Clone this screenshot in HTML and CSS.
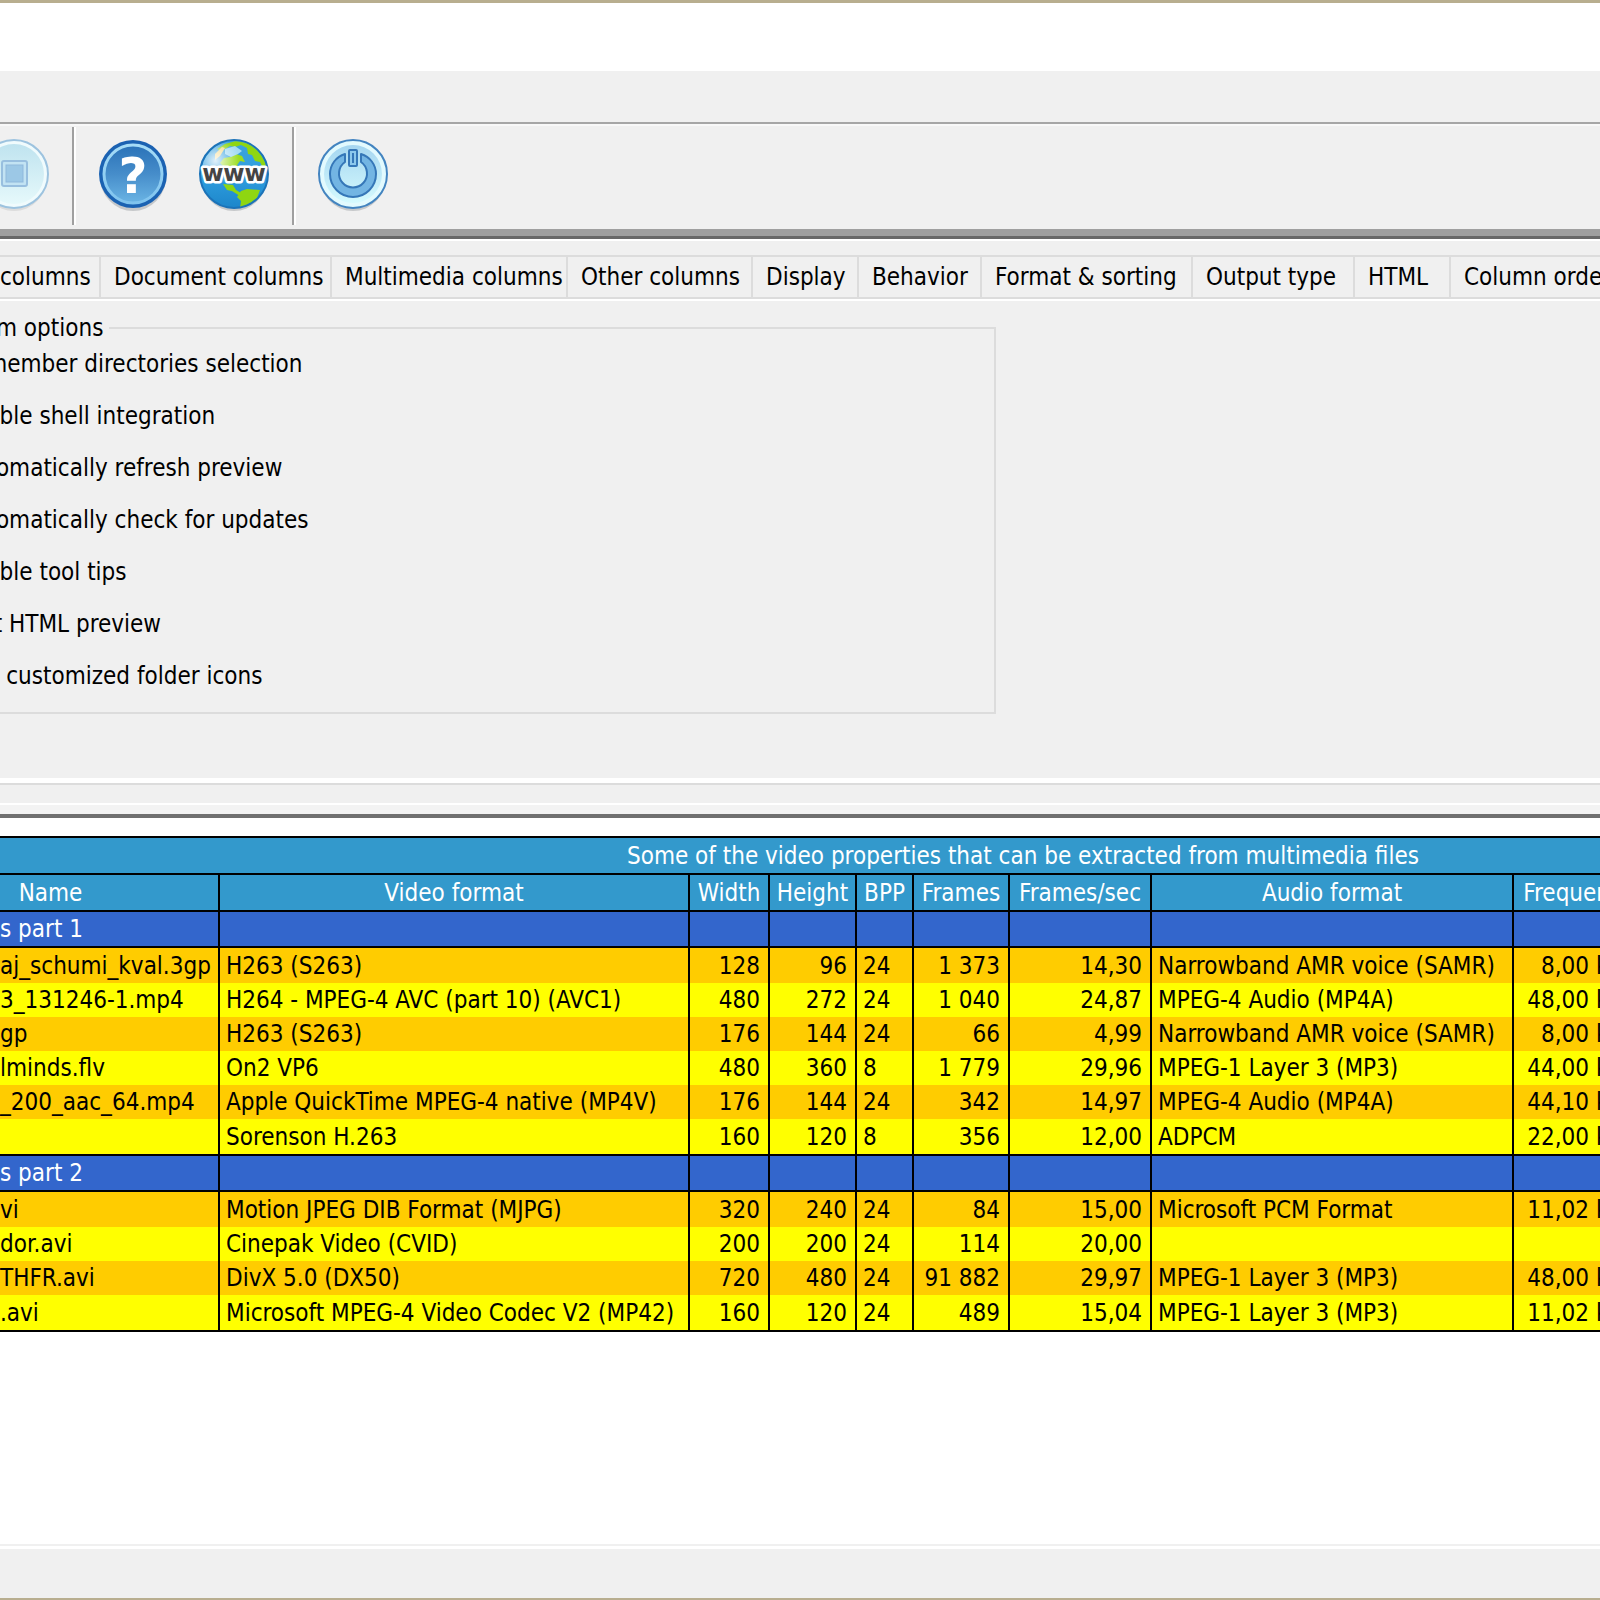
FILE: index.html
```
<!DOCTYPE html>
<html lang="en">
    <head>
        <meta charset="utf-8">
        <title>Directory listing</title>
        <link rel="stylesheet" href="styles.css">
    </head>
    <body>
        <div class="titlebar"></div>
        <div class="menubar"></div>

        <div class="toolbar">
            <button class="tool" aria-label="Stop" disabled>
                <svg viewBox="0 0 72 76">
                    <defs>
                        <linearGradient id="stop_fill" x1="0" y1="0" x2="0" y2="1">
                            <stop offset="0" stop-color="#bfe3ef"/>
                            <stop offset="1" stop-color="#e6f9fb"/>
                        </linearGradient>
                    </defs>
                    <ellipse cx="36" cy="39" rx="33" ry="34" fill="#dcdcdc"/>
                    <circle cx="36" cy="36" r="34" fill="#f0fbfd" stroke="#9dc3df" stroke-width="2"/>
                    <circle cx="36" cy="36" r="30" fill="url(#stop_fill)"/>
                    <rect x="24" y="23" width="25" height="25" rx="2" fill="#c2e3f3" stroke="#98bfdf" stroke-width="2"/>
                    <rect x="28" y="27" width="17" height="17" fill="#9cc8e6" stroke="#8fb9dc"/>
                </svg>
            </button>
            <div class="divider"></div>
            <button class="tool" aria-label="Help">
                <svg viewBox="0 0 72 76">
                    <defs>
                        <linearGradient id="help_fill" x1="0" y1="0" x2="0" y2="1">
                            <stop offset="0" stop-color="#2a72b8"/>
                            <stop offset="0.5" stop-color="#468dca"/>
                            <stop offset="1" stop-color="#6ab4e4"/>
                        </linearGradient>
                        <linearGradient id="help_ring" x1="0" y1="0" x2="0" y2="1">
                            <stop offset="0" stop-color="#a5dcf7"/>
                            <stop offset="1" stop-color="#7fc3ee"/>
                        </linearGradient>
                    </defs>
                    <ellipse cx="36" cy="39" rx="33" ry="34" fill="#c6c8ca"/>
                    <circle cx="36" cy="36" r="34" fill="#1b62b2"/>
                    <circle cx="36" cy="36" r="29" fill="url(#help_fill)" stroke="url(#help_ring)" stroke-width="3"/>
                    <text class="mark" x="36" y="55" text-anchor="middle">?</text>
                </svg>
            </button>
            <button class="tool" aria-label="Web site">
                <svg viewBox="0 0 72 76">
                    <defs>
                        <linearGradient id="sea" x1="0" y1="0" x2="0" y2="1">
                            <stop offset="0" stop-color="#3da3dd"/>
                            <stop offset="0.5" stop-color="#2f9fe0"/>
                            <stop offset="1" stop-color="#1d86ca"/>
                        </linearGradient>
                        <radialGradient id="shine" cx="0.22" cy="0.3" r="0.36">
                            <stop offset="0" stop-color="#fff" stop-opacity="0.85"/>
                            <stop offset="1" stop-color="#fff" stop-opacity="0"/>
                        </radialGradient>
                        <clipPath id="globe"><circle cx="36" cy="36" r="33"/></clipPath>
                    </defs>
                    <ellipse cx="36" cy="39" rx="33" ry="34" fill="#c6c8ca"/>
                    <circle cx="36" cy="36" r="34" fill="url(#sea)" stroke="#1c73b8" stroke-width="2"/>
                    <g clip-path="url(#globe)">
                        <path fill="#8fd611" d="M19 11l8-5 11-3 13 1 10 9 7 13-2 6-4-8-5-1-3-6-4-1-1-6-6-3-6 2-5-1-5 3-6 1z"/>
                        <path fill="#9bdd20" d="M38 16l6 2 3 6-5-1-3 4 4 4-7 2-1 4h-6l-3-8-4-4 4-5 6-1z"/>
                        <path fill="#8fd611" d="M25 46l10 1 3 5 5 3-1 3-8-5-5-1zM43 53l6-2 13 1-3 8-6 5-6 6-5-1 1-7-4-4z"/>
                        <path fill="#a5dbf4" d="M27 11l10-3 7 5-4 3-7 3-6-3z"/>
                        <path fill="#f5d780" d="M17 16l7-7 3 1-5 8-5 4z"/>
                        <circle cx="36" cy="36" r="33" fill="url(#shine)"/>
                    </g>
                    <text class="www" x="36" y="43" text-anchor="middle">www</text>
                </svg>
            </button>
            <div class="divider"></div>
            <button class="tool" aria-label="Exit">
                <svg viewBox="0 0 72 76">
                    <defs>
                        <linearGradient id="exit_fill" x1="0" y1="0" x2="0" y2="1">
                            <stop offset="0" stop-color="#a5d6f0"/>
                            <stop offset="1" stop-color="#d5fafe"/>
                        </linearGradient>
                    </defs>
                    <ellipse cx="36" cy="39" rx="33" ry="34" fill="#c6c8ca"/>
                    <circle cx="36" cy="36" r="34" fill="#e2fafe" stroke="#4384c0" stroke-width="2"/>
                    <circle cx="36" cy="36" r="29" fill="url(#exit_fill)"/>
                    <path d="M28 16a21 21 0 0 0-15 20a23 23 0 0 0 46 0a21 21 0 0 0-15-20v8a14 14 0 1 1-16 0z" fill="#73b5e3" stroke="#3577b8" stroke-width="2" stroke-linejoin="round"/>
                    <rect x="32" y="12" width="8" height="16" rx="1" fill="#8cc8ec" stroke="#3577b8" stroke-width="2"/>
                    <path d="M36 15v10" stroke="#3577b8" stroke-width="2"/>
                </svg>
            </button>
        </div>

        <div class="options">
            <div class="tabs" role="tablist">
                <button role="tab" class="tab tab_first">columns</button>
                <button role="tab" class="tab">Document columns</button>
                <button role="tab" class="tab">Multimedia columns</button>
                <button role="tab" class="tab">Other columns</button>
                <button role="tab" class="tab">Display</button>
                <button role="tab" class="tab">Behavior</button>
                <button role="tab" class="tab">Format &amp; sorting</button>
                <button role="tab" class="tab">Output type</button>
                <button role="tab" class="tab">HTML</button>
                <button role="tab" class="tab">Column order</button>
            </div>
            <fieldset class="program_options">
                <legend>Program options</legend>
                <label><input type="checkbox">Remember directories selection</label>
                <label><input type="checkbox">Enable shell integration</label>
                <label><input type="checkbox">Automatically refresh preview</label>
                <label><input type="checkbox">Automatically check for updates</label>
                <label><input type="checkbox">Enable tool tips</label>
                <label><input type="checkbox">Fast HTML preview</label>
                <label><input type="checkbox">Use customized folder icons</label>
            </fieldset>
        </div>
        <div class="splitter"></div>

        <div class="preview">
            <table class="listing">
                <colgroup>
                    <col class="c_name"><col class="c_video"><col class="c_width"><col class="c_height"><col class="c_bpp">
                    <col class="c_frames"><col class="c_fps"><col class="c_audio"><col class="c_freq"><col>
                </colgroup>
                <thead>
                    <tr><th colspan="10">Some of the video properties that can be extracted from multimedia files</th></tr>
                    <tr>
                        <th>Name</th><th>Video format</th><th>Width</th><th>Height</th><th>BPP</th>
                        <th>Frames</th><th>Frames/sec</th><th>Audio format</th><th>Frequency</th><th></th>
                    </tr>
                </thead>
                <tbody>
                    <tr class="group"><td>s part 1</td><td></td><td></td><td></td><td></td><td></td><td></td><td></td><td></td><td></td></tr>
                    <tr><td>aj_schumi_kval.3gp</td><td>H263 (S263)</td><td class="num">128</td><td class="num">96</td><td>24</td><td class="num">1 373</td><td class="num">14,30</td><td>Narrowband AMR voice (SAMR)</td><td class="num">8,00 kHz</td><td></td></tr>
                    <tr><td>3_131246-1.mp4</td><td>H264 - MPEG-4 AVC (part 10) (AVC1)</td><td class="num">480</td><td class="num">272</td><td>24</td><td class="num">1 040</td><td class="num">24,87</td><td>MPEG-4 Audio (MP4A)</td><td class="num">48,00 kHz</td><td></td></tr>
                    <tr><td>gp</td><td>H263 (S263)</td><td class="num">176</td><td class="num">144</td><td>24</td><td class="num">66</td><td class="num">4,99</td><td>Narrowband AMR voice (SAMR)</td><td class="num">8,00 kHz</td><td></td></tr>
                    <tr><td>lminds.flv</td><td>On2 VP6</td><td class="num">480</td><td class="num">360</td><td>8</td><td class="num">1 779</td><td class="num">29,96</td><td>MPEG-1 Layer 3 (MP3)</td><td class="num">44,00 kHz</td><td></td></tr>
                    <tr><td>_200_aac_64.mp4</td><td>Apple QuickTime MPEG-4 native (MP4V)</td><td class="num">176</td><td class="num">144</td><td>24</td><td class="num">342</td><td class="num">14,97</td><td>MPEG-4 Audio (MP4A)</td><td class="num">44,10 kHz</td><td></td></tr>
                    <tr><td></td><td>Sorenson H.263</td><td class="num">160</td><td class="num">120</td><td>8</td><td class="num">356</td><td class="num">12,00</td><td>ADPCM</td><td class="num">22,00 kHz</td><td></td></tr>
                </tbody>
                <tbody>
                    <tr class="group"><td>s part 2</td><td></td><td></td><td></td><td></td><td></td><td></td><td></td><td></td><td></td></tr>
                    <tr><td>vi</td><td>Motion JPEG DIB Format (MJPG)</td><td class="num">320</td><td class="num">240</td><td>24</td><td class="num">84</td><td class="num">15,00</td><td>Microsoft PCM Format</td><td class="num">11,02 kHz</td><td></td></tr>
                    <tr><td>dor.avi</td><td>Cinepak Video (CVID)</td><td class="num">200</td><td class="num">200</td><td>24</td><td class="num">114</td><td class="num">20,00</td><td></td><td></td><td></td></tr>
                    <tr><td>THFR.avi</td><td>DivX 5.0 (DX50)</td><td class="num">720</td><td class="num">480</td><td>24</td><td class="num">91 882</td><td class="num">29,97</td><td>MPEG-1 Layer 3 (MP3)</td><td class="num">48,00 kHz</td><td></td></tr>
                    <tr><td>.avi</td><td>Microsoft MPEG-4 Video Codec V2 (MP42)</td><td class="num">160</td><td class="num">120</td><td>24</td><td class="num">489</td><td class="num">15,04</td><td>MPEG-1 Layer 3 (MP3)</td><td class="num">11,02 kHz</td><td></td></tr>
                </tbody>
            </table>
        </div>

        <div class="statusbar"></div>
    </body>
</html>
```
FILE: styles.css
```
* {
    box-sizing: border-box;
}
body {
    margin: 0;
    min-height: 100vh;
    display: flex;
    flex-direction: column;
    overflow: hidden;
    background-color: #f0f0f0;
    color: #000;
    font-family: "DejaVu Sans Condensed", "DejaVu Sans", sans-serif;
    font-size: 24px;
    line-height: 34px;
}
button {
    font: inherit;
    color: inherit;
    background: none;
    border: 0;
    padding: 0;
}
.titlebar {
    height: 71px;
    border-top: 3px solid #b8ae8f;
    background-color: #fff;
}
.menubar {
    height: 53px;
    border-bottom: 2px solid #a6a6a6;
}

/* toolbar, scrolled a little past the left edge */
.toolbar {
    display: flex;
    align-items: center;
    height: 115px;
    padding-bottom: 8px;
    margin-left: -22px;
    border-bottom: 3px solid #686868;
    box-shadow: inset 0 -7px #9f9f9f, inset 0 2px #f8f8f8;
}
.tool {
    width: 72px;
    height: 76px;
}
.tool svg {
    display: block;
    width: 72px;
    height: 76px;
}
.tool + .tool {
    margin-left: 29px;
}
.divider {
    width: 4px;
    height: 98px;
    margin: 0 21px 0 22px;
    background-color: #a0a0a0;
    border-right: 2px solid #fff;
}
.mark {
    font: bold 50px "DejaVu Sans", sans-serif;
    fill: #fff;
}
.www {
    font: bold 23px "DejaVu Sans", sans-serif;
    fill: #444;
    stroke: #fff;
    stroke-width: 5px;
    stroke-linejoin: round;
    paint-order: stroke;
}

.options {
    height: 539px;
    padding-top: 14px;
    border-top: 2px solid #fff;
}
.tabs {
    display: grid;
    grid-template-columns: 101px 231px 236px 185px 106px 123px 211px 162px 96px 1fr;
    height: 46px;
    border-top: 2px solid #dcdcdc;
    border-bottom: 2px solid #fff;
}
.tab {
    height: 42px;
    padding-left: 13px;
    border-right: 2px solid #dcdcdc;
    border-bottom: 2px solid #dcdcdc;
    text-align: left;
    white-space: nowrap;
    overflow: hidden;
}
.tab_first {
    padding-left: 0;
}
.tab:last-child {
    border-right: 0;
}
.program_options {
    width: 1120px;
    height: 396px;
    margin: 17px 0 0 -124px;
    padding: 0 0 0 54px;
    border: 2px solid #dcdcdc;
}
.program_options legend {
    margin-left: -12px;
    padding: 0 6px;
    line-height: 20px;
}
.program_options label {
    display: flex;
    align-items: center;
    height: 52px;
}
.program_options input {
    width: 24px;
    height: 24px;
    margin: 0 3px 0 0;
}

.splitter {
    height: 40px;
    border-top: 5px solid #fff;
    border-bottom: 4px solid #707070;
    box-shadow: inset 0 2px #dcdcdc, inset 0 -9px #f3f3f3, inset 0 -11px #fff;
}
.preview {
    flex: 1;
    padding-top: 18px;
    background-color: #fff;
    border-bottom: 2px solid #f0f0f0;
    overflow: hidden;
}

/* the listing is wider than the window */
.listing {
    width: 2284px;
    margin-left: -119px;
    table-layout: fixed;
    border-collapse: collapse;
    white-space: nowrap;
}
.listing th {
    height: 37px;
    padding: 0;
    border: 2px solid #000;
    background-color: #3399cc;
    color: #fff;
    font-weight: normal;
}
.listing td {
    height: 34px;
    padding: 0 8px 0 6px;
    border-left: 2px solid #000;
    border-right: 2px solid #000;
    text-align: left;
}
.listing td:first-child {
    padding-left: 117px;
}
.listing .num {
    text-align: right;
}
.listing tr:nth-child(even) td {
    background-color: #ffcc00;
}
.listing tr:nth-child(odd) td {
    background-color: #ffff00;
}
.listing tr.group td {
    height: 36px;
    background-color: #3366cc;
    color: #fff;
    border-top: 2px solid #000;
    border-bottom: 2px solid #000;
}
.listing tr.group + tr td {
    height: 36px;
}
.listing tr:last-child td {
    height: 36px;
    border-bottom: 2px solid #000;
}
.c_name { width: 337px; }
.c_video { width: 470px; }
.c_width { width: 80px; }
.c_height { width: 87px; }
.c_bpp { width: 57px; }
.c_frames { width: 96px; }
.c_fps { width: 142px; }
.c_audio { width: 362px; }
.c_freq { width: 132px; }

.statusbar {
    height: 54px;
    border-top: 3px solid #fff;
    border-bottom: 2px solid #b8ae8f;
}
```
